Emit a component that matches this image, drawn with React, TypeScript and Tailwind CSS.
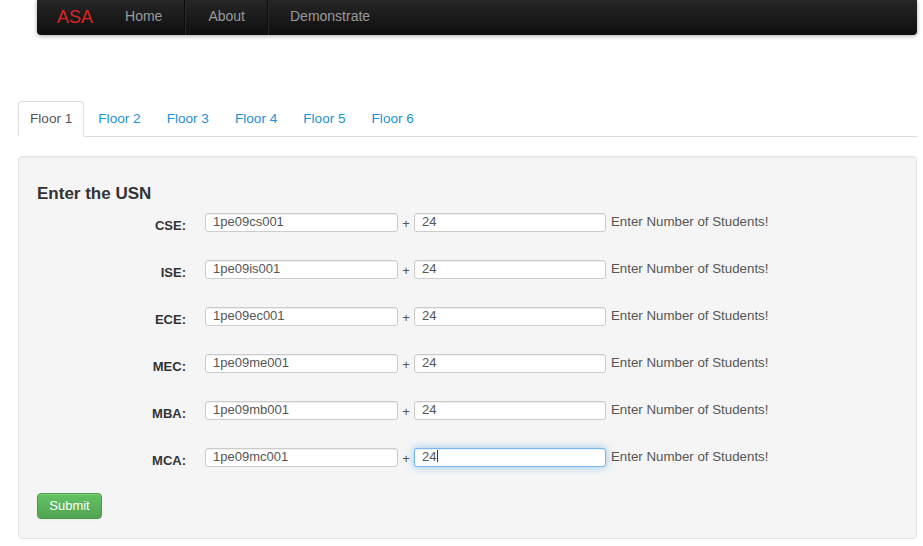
import React from "react";

const rows = [
  { label: "CSE:", usn: "1pe09cs001", n: "24" },
  { label: "ISE:", usn: "1pe09is001", n: "24" },
  { label: "ECE:", usn: "1pe09ec001", n: "24" },
  { label: "MEC:", usn: "1pe09me001", n: "24" },
  { label: "MBA:", usn: "1pe09mb001", n: "24" },
  { label: "MCA:", usn: "1pe09mc001", n: "24", focus: true },
];

export default function App() {
  return (
    <div
      className="w-[923px] h-[546px] bg-white overflow-hidden text-[#333]"
      style={{ fontFamily: '"Liberation Sans", Arial, sans-serif' }}
    >
      {/* navbar */}
      <div className="ml-[37px] w-[880px] h-[35px] flex items-stretch rounded-b-[4px] bg-gradient-to-b from-[#262626] to-[#0f0f0f] shadow-[0_1px_4px_rgba(0,0,0,0.35)]">
        <div className="pl-[20px] pr-[17px] pb-[1px] flex items-center text-[18px] text-[#dc2323] leading-none">
          ASA
        </div>
        <div className="px-[15px] pb-[2px] flex items-center text-[14px] text-[#9a9a9a]">Home</div>
        <div className="mx-[7px] flex">
          <div className="w-px bg-[#0c0c0c]" />
          <div className="w-px bg-[#2a2a2a]" />
        </div>
        <div className="px-[15px] pb-[2px] flex items-center text-[14px] text-[#9a9a9a]">About</div>
        <div className="mx-[7px] flex">
          <div className="w-px bg-[#0c0c0c]" />
          <div className="w-px bg-[#2a2a2a]" />
        </div>
        <div className="pl-[14px] pr-[15px] pb-[2px] flex items-center text-[14px] text-[#9a9a9a]">Demonstrate</div>
      </div>

      {/* tabs */}
      <div className="ml-[18px] w-[899px] mt-[66px] flex border-b border-[#ddd] h-[36px]">
        {["Floor 1", "Floor 2", "Floor 3", "Floor 4", "Floor 5", "Floor 6"].map((t, i) => (
          <div
            key={t}
            className={
              i === 0
                ? "mr-[2px] -mb-px h-[36px] px-[11px] flex items-center text-[13.6px] text-[#555] bg-white border border-[#ddd] border-b-white rounded-t-[4px]"
                : "mr-[2px] h-[35px] px-[11px] pt-[1px] flex items-center text-[13.6px] text-[#1a92d6] border border-transparent"
            }
          >
            {t}
          </div>
        ))}
      </div>

      {/* well */}
      <div className="ml-[18px] w-[899px] mt-[19px] bg-[#f5f5f5] border border-[#e3e3e3] rounded-[4px] px-[18px] pt-[19px] pb-[19px] shadow-[inset_0_1px_1px_rgba(0,0,0,0.05)]">
        <div className="mt-[8px] h-[20px] leading-[20px] text-[17px] font-bold text-[#333]">Enter the USN</div>
        <div className="mt-[9px] flex flex-col">
          {rows.map((r, i) => (
            <div key={r.label} className={`flex items-start ${i < rows.length - 1 ? "h-[47px]" : "h-[19px]"}`}>
              <div className="w-[149px] text-right text-[13px] font-bold leading-[19px] pt-[3px] text-[#333]">
                {r.label}
              </div>
              <div className="ml-[19px] w-[193px] h-[19px] bg-white border border-[#ccc] rounded-[3px] px-[7px] text-[13px] leading-[16px] text-[#555] shadow-[inset_0_1px_1px_rgba(0,0,0,0.075)]">
                {r.usn}
              </div>
              <div className="w-[16px] text-center text-[13px] leading-[19px] pt-[1px] text-[#555]">+</div>
              <div
                className={
                  r.focus
                    ? "w-[192px] h-[19px] bg-white border border-[rgba(82,168,236,0.8)] rounded-[3px] px-[7px] text-[13px] leading-[16px] text-[#555] shadow-[inset_0_1px_1px_rgba(0,0,0,0.075),0_0_8px_rgba(82,168,236,0.6)]"
                    : "w-[192px] h-[19px] bg-white border border-[#ccc] rounded-[3px] px-[7px] text-[13px] leading-[16px] text-[#555] shadow-[inset_0_1px_1px_rgba(0,0,0,0.075)]"
                }
              >
                {r.n}
                {r.focus && <span className="inline-block align-[-1px] w-px h-[12px] bg-[#333] ml-[1px]" />}
              </div>
              <div className="ml-[5px] text-[13.3px] leading-[17px] text-[#555]">Enter Number of Students!</div>
            </div>
          ))}
        </div>
        <div className="mt-[26px] w-[65px] h-[26px] rounded-[4px] bg-gradient-to-b from-[#62c462] to-[#51a351] border border-[#4a9a4a] text-white text-[13px] flex items-center justify-center shadow-[inset_0_1px_0_rgba(255,255,255,0.2),0_1px_2px_rgba(0,0,0,0.05)]">
          Submit
        </div>
      </div>
    </div>
  );
}
